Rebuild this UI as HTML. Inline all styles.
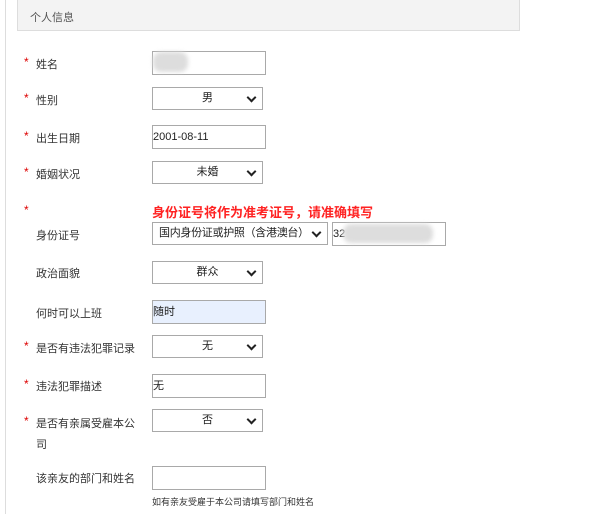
<!DOCTYPE html><html><head><meta charset="utf-8"><style>
body{margin:0;width:605px;height:514px;background:#fff;font-family:"Liberation Sans","Noto Sans CJK SC",sans-serif;font-size:11px;color:#333;position:relative;overflow:hidden}
.a{position:absolute}
.vl{left:5px;top:0;width:1px;height:514px;background:#ddd}
.hd{left:17px;top:0;width:501px;height:30px;background:#f3f3f3;border:1px solid #ddd;border-top:none}
.hd span{position:absolute;left:12px;top:9px;color:#555}
.st{color:#d00;left:24px;font-size:12px}
.lb{left:36px}
.in{border:1px solid #a9a9a9;height:22px;width:112px;left:152px;box-sizing:content-box;line-height:22px;background:#fff;font-size:11px;color:#222}
.sel{border:1px solid #a9a9a9;height:21px;width:109px;left:152px;line-height:21px;background:#fff;text-align:center;color:#222;font-size:11px}
.sel:after{content:"";position:absolute;right:7px;top:6px;width:5px;height:5px;border-right:2px solid #222;border-bottom:2px solid #222;transform:rotate(45deg)}
.blur{background:#ddd;filter:blur(2px)}
</style></head><body>
<div class="a vl"></div>
<div class="a hd"><span>个人信息</span></div>

<div class="a st" style="top:55px">*</div><div class="a lb" style="top:56px">姓名</div>
<div class="a in" style="top:51px"></div><div class="a blur" style="left:153px;top:52px;width:35px;height:20px;border-radius:8px"></div>

<div class="a st" style="top:91px">*</div><div class="a lb" style="top:92px">性别</div>
<div class="a sel" style="top:87px">男</div>

<div class="a st" style="top:129px">*</div><div class="a lb" style="top:130px">出生日期</div>
<div class="a in" style="top:125px">2001-08-11</div>

<div class="a st" style="top:165px">*</div><div class="a lb" style="top:166px">婚姻状况</div>
<div class="a sel" style="top:161px">未婚</div>

<div class="a st" style="top:203px">*</div>
<div class="a" style="left:152px;top:202px;color:#f22;font-weight:bold;font-size:13px">身份证号将作为准考证号，请准确填写</div>
<div class="a lb" style="top:227px">身份证号</div>
<div class="a sel" style="top:222px;width:174px;text-align:left;font-size:11px;letter-spacing:-0.3px"><span style="padding-left:6px">国内身份证或护照（含港澳台）</span></div>
<div class="a in" style="top:222px;left:332px">32</div><div class="a blur" style="left:343px;top:224px;width:90px;height:19px;border-radius:8px"></div>

<div class="a lb" style="top:265px">政治面貌</div>
<div class="a sel" style="top:261px">群众</div>

<div class="a lb" style="top:305px">何时可以上班</div>
<div class="a in" style="top:300px;background:#e8f0fe">随时</div>

<div class="a st" style="top:339px">*</div><div class="a lb" style="top:340px">是否有违法犯罪记录</div>
<div class="a sel" style="top:335px">无</div>

<div class="a st" style="top:377px">*</div><div class="a lb" style="top:378px">违法犯罪描述</div>
<div class="a in" style="top:374px">无</div>

<div class="a st" style="top:414px">*</div><div class="a lb" style="top:414px;line-height:21px;width:100px">是否有亲属受雇本公司</div>
<div class="a sel" style="top:409px">否</div>

<div class="a lb" style="top:470px">该亲友的部门和姓名</div>
<div class="a in" style="top:466px"></div>
<div class="a" style="left:152px;top:495px;font-size:9px;color:#333">如有亲友受雇于本公司请填写部门和姓名</div>
</body></html>
